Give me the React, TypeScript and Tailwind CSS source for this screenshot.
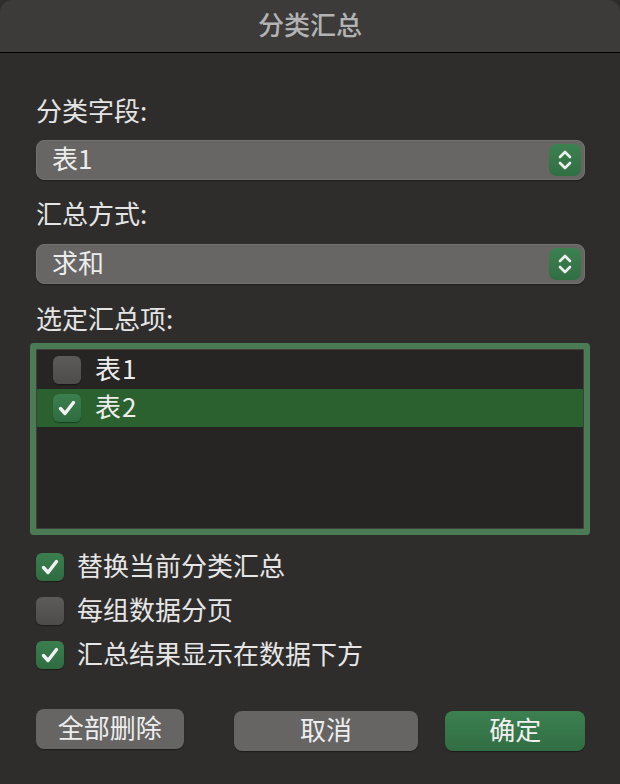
import React, { useState } from 'react';

const FONT = { fontFamily: '"Noto Sans CJK SC", "Noto Sans", sans-serif' };

const Check: React.FC<{ on: boolean }> = ({ on }) =>
  on ? (
    <span className="flex h-[28px] w-[28px] shrink-0 items-center justify-center rounded-[6px] bg-gradient-to-b from-[#3b7f4e] to-[#2f6c41] shadow-[0_1px_1px_rgba(0,0,0,0.4)]">
      <svg width="20" height="18" viewBox="0 0 20 18" fill="none">
        <path d="M3.5 9.5 L8 14.5 L16.5 3.5" stroke="#f2f2f2" strokeWidth="3.4" strokeLinecap="round" strokeLinejoin="round" />
      </svg>
    </span>
  ) : (
    <span className="block h-[28px] w-[28px] shrink-0 rounded-[6px] bg-gradient-to-b from-[#5c5b5a] to-[#4d4c4b] shadow-[0_1px_1px_rgba(0,0,0,0.4)]" />
  );

const Select: React.FC<{ value: string }> = ({ value }) => (
  <div className="flex h-[40px] items-center justify-between rounded-[8px] border border-[#727170] bg-[#676665] pl-[15px] pr-[3px] shadow-[0_1px_1px_rgba(0,0,0,0.35)]">
    <span className="text-[26px] leading-none text-[#ececec] -mt-[5px]">{value}</span>
    <span className="flex h-[32px] w-[32px] items-center justify-center rounded-[7px] bg-gradient-to-b from-[#3d8150] to-[#316f43]">
      <svg width="18" height="24" viewBox="0 0 18 24" fill="none">
        <path d="M4 9 L9 4 L14 9" stroke="#eeeeee" strokeWidth="2.6" strokeLinecap="round" strokeLinejoin="round" />
        <path d="M4 15 L9 20 L14 15" stroke="#eeeeee" strokeWidth="2.6" strokeLinecap="round" strokeLinejoin="round" />
      </svg>
    </span>
  </div>
);

export default function App() {
  const [items, setItems] = useState([false, true]);
  const [opts, setOpts] = useState([true, false, true]);

  return (
    <div className="h-[784px] w-[620px] overflow-hidden bg-[#2e2d2c]" style={FONT}>
      {/* Title bar */}
      <div className="flex h-[53px] items-center justify-center rounded-t-[12px] border-b border-black bg-[#3c3b3a]">
        <span className="-mt-[4px] text-[26px] font-medium leading-none text-[#b3b3b3]">分类汇总</span>
      </div>

      <div className="flex flex-col px-[36px] pr-[35px]">
        <div className="mt-[42px] h-[30px] text-[26px] leading-[30px] text-[#e4e4e4]">分类字段:</div>
        <div className="mt-[15px]">
          <Select value="表1" />
        </div>

        <div className="mt-[18px] h-[30px] text-[26px] leading-[30px] text-[#e4e4e4]">汇总方式:</div>
        <div className="mt-[16px]">
          <Select value="求和" />
        </div>

        <div className="mt-[19px] h-[30px] text-[26px] leading-[30px] text-[#e4e4e4]">选定汇总项:</div>

        {/* List box with focus ring */}
        <div className="mt-[16px] mr-[1px] h-[180px] rounded-[1px] border border-[#3f3e3d] bg-[#262524] py-px shadow-[0_0_0_6px_#4a7b54]">
          {['表1', '表2'].map((t, i) => (
            <div
              key={t}
              onClick={() => setItems(items.map((v, j) => (j === i ? !v : v)))}
              className={`flex h-[38px] cursor-pointer items-center gap-[14px] pl-[16px] ${items[i] ? 'bg-[#2a612f]' : ''}`}
            >
              <Check on={items[i]} />
              <span className="-mt-[4px] text-[26px] leading-none tracking-[1px] text-[#ececec]">{t}</span>
            </div>
          ))}
        </div>

        {/* Options */}
        <div className="mt-[16px] flex flex-col">
          {['替换当前分类汇总', '每组数据分页', '汇总结果显示在数据下方'].map((t, i) => (
            <div
              key={t}
              onClick={() => setOpts(opts.map((v, j) => (j === i ? !v : v)))}
              className="flex h-[44px] cursor-pointer items-center gap-[13px]"
            >
              <Check on={opts[i]} />
              <span className="-mt-[4px] text-[26px] leading-none text-[#e6e6e6]">{t}</span>
            </div>
          ))}
        </div>

        {/* Buttons */}
        <div className="mt-[32px] flex items-start">
          <button className="flex h-[40px] w-[148px] items-center justify-center rounded-[8px] bg-[#666564] shadow-[0_1px_1px_rgba(0,0,0,0.4)]">
            <span className="-mt-[4px] text-[26px] leading-none text-[#eeeeee]">全部删除</span>
          </button>
          <button className="ml-[50px] mt-[2px] flex h-[40px] w-[185px] items-center justify-center rounded-[8px] bg-[#666564] shadow-[0_1px_1px_rgba(0,0,0,0.4)]">
            <span className="-mt-[4px] text-[26px] leading-none text-[#eeeeee]">取消</span>
          </button>
          <button className="ml-[27px] mt-[2px] flex h-[40px] w-[140px] items-center justify-center rounded-[8px] bg-gradient-to-b from-[#3c8050] to-[#316e43] shadow-[0_1px_1px_rgba(0,0,0,0.4)]">
            <span className="-mt-[4px] text-[26px] leading-none text-[#f0f0f0]">确定</span>
          </button>
        </div>
      </div>
    </div>
  );
}
